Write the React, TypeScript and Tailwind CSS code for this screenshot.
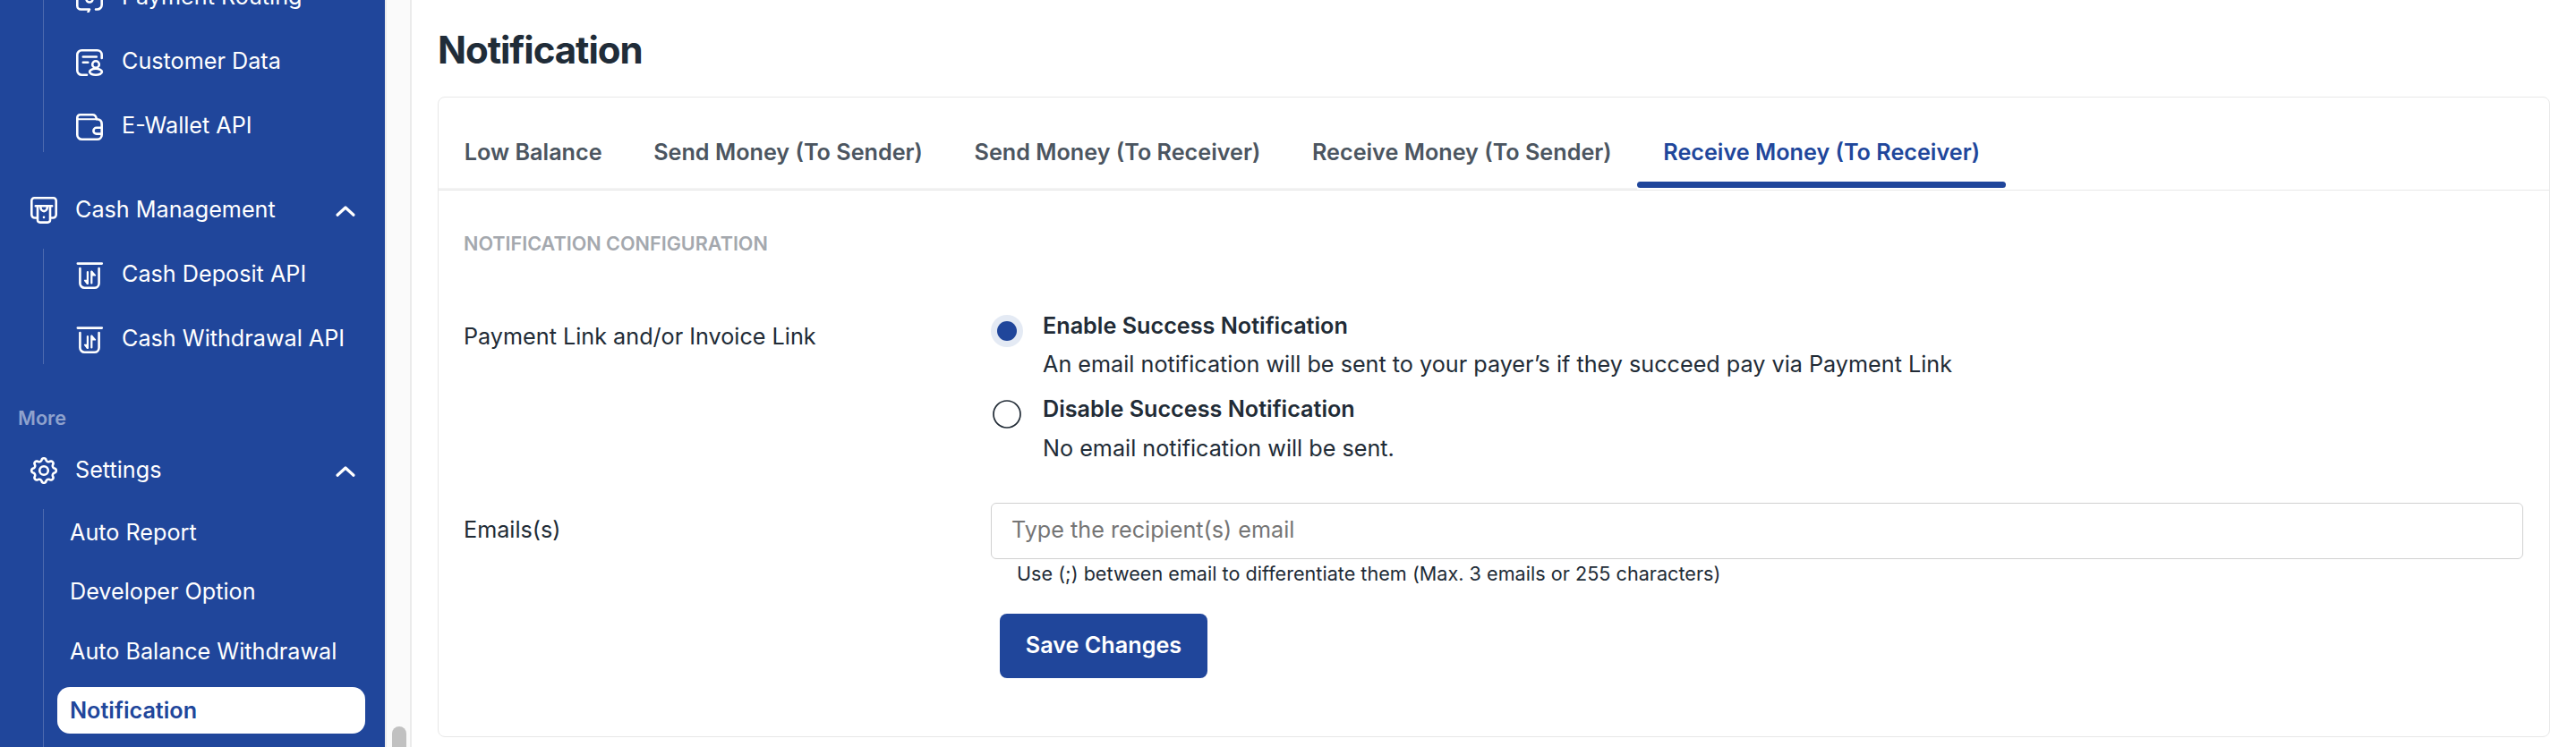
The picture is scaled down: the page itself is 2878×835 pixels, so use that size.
import type { ReactNode } from "react";

function Icon({ children }: { children: ReactNode }) {
  return (
    <svg
      width="32"
      height="32"
      viewBox="0 0 32 32"
      fill="none"
      stroke="currentColor"
      strokeWidth="2.6"
      strokeLinecap="round"
      strokeLinejoin="round"
      className="shrink-0"
    >
      {children}
    </svg>
  );
}

const RoutingIcon = () => (
  <Icon>
    <path d="M2.3 12v12.500a4 4 0 0 0 4 4H16l-1.500 3M2.300 12V7.300a5 5 0 0 1 5-5h17.400a5 5 0 0 1 5 5v16.200a5 5 0 0 1-5 5H23" />
    <circle cx="16" cy="17" r="3.500" />
  </Icon>
);

const CustomerIcon = () => (
  <Icon>
    <path d="M13 29.700H7.300a5 5 0 0 1-5-5V7.300a5 5 0 0 1 5-5h17.400a5 5 0 0 1 5 5V11" />
    <path d="M8.800 9.500h15M8.800 15.800h5.500" />
    <circle cx="23" cy="18" r="3.800" />
    <ellipse cx="23" cy="26.300" rx="6.900" ry="3.500" />
  </Icon>
);

const WalletIcon = () => (
  <Icon>
    <path d="M2.300 7V5.500a3.200 3.200 0 0 1 3.200-3.200H19.500c2.200 0 3.600 1.400 4.300 4.200" />
    <path strokeWidth="2" d="M3 7.300H24" />
    <path d="M24 7.300c3.600 0 5.700 2 5.700 5.600v11.800a5 5 0 0 1-5 5H7.300a5 5 0 0 1-5-5V6.500" />
    <path d="M29.500 16.800h-5.700a3.400 3.400 0 0 0 0 6.800h5.700" />
  </Icon>
);

const CashIcon = () => (
  <Icon>
    <path d="M7.500 24.500H5.800a3.500 3.500 0 0 1-3.500-3.500V5.300a3 3 0 0 1 3-3h21.400a3 3 0 0 1 3 3V21a3.500 3.500 0 0 1-3.500 3.500h-1.700" />
    <path d="M6.800 11.300h18.400M9 11.500v15.300a2.800 2.800 0 0 0 2.800 2.800h8.400a2.800 2.800 0 0 0 2.800-2.800V11.500" />
    <path d="M12.400 12.500a3.700 4.600 0 0 0 7.400 0M16 23.800v.2" />
  </Icon>
);

const DepositIcon = () => (
  <Icon>
    <path d="M2.800 2.600h27M5.400 8v16.700a5 5 0 0 0 5 5h11.200a5 5 0 0 0 5-5V8" />
    <path strokeWidth="2.200" d="M13.900 12v13M18.300 24.500V11.500" />
    <path strokeWidth="1.600" fill="currentColor" d="M13.600 25.300L10.700 21.500h2.900zM18.600 11.500L22.400 15.800h-3.800z" />
  </Icon>
);

const gearPath = (() => {
  const pts: string[] = [];
  for (let i = 0; i < 160; i++) {
    const a = (i / 160) * Math.PI * 2;
    const c = Math.cos(8 * a);
    const r = 12.3 + 1.45 * Math.sign(c) * Math.pow(Math.abs(c), 0.55);
    pts.push(`${(16 + r * Math.sin(a)).toFixed(2)} ${(16 - r * Math.cos(a)).toFixed(2)}`);
  }
  return `M${pts.join("L")}Z`;
})();

const GearIcon = () => (
  <Icon>
    <path d={gearPath} />
    <circle cx="16" cy="16" r="4.800" />
  </Icon>
);

const Chevron = () => (
  <svg width="24" height="14" viewBox="0 0 24 14" fill="none" stroke="currentColor" strokeWidth="3.2" strokeLinecap="round" strokeLinejoin="round">
    <path d="M3 11.200L12 3l9 8.200" />
  </svg>
);

function SubItem({ icon, label }: { icon: ReactNode; label: string }) {
  return (
    <li className="flex h-[72px] items-center gap-5">
      <span className="pt-1">{icon}</span>
      <span>{label}</span>
    </li>
  );
}

function GroupHeader({ icon, label }: { icon: ReactNode; label: string }) {
  return (
    <div className="flex h-[72px] items-center pr-8 pl-[33px]">
      <span className="pt-0.5">{icon}</span>
      <span className="ml-[19px] flex-1">{label}</span>
      <span className="pt-1">
        <Chevron />
      </span>
    </div>
  );
}

const settings = ["Auto Report", "Developer Option", "Auto Balance Withdrawal", "Notification"];

function Sidebar() {
  return (
    <aside className="flex h-full w-[430px] shrink-0 flex-col overflow-hidden bg-[#20469b] text-[25.2px] leading-8 text-white">
      <div className="-mt-10 flex shrink-0 pl-12">
        <div className="mb-1.5 w-px bg-[#4d6baf]" />
        <ul className="pl-[35px]">
          <SubItem icon={<RoutingIcon />} label="Payment Routing" />
          <SubItem icon={<CustomerIcon />} label="Customer Data" />
          <SubItem icon={<WalletIcon />} label="E-Wallet API" />
        </ul>
      </div>
      <div className="mt-[22px] shrink-0">
        <GroupHeader icon={<CashIcon />} label="Cash Management" />
        <div className="flex pl-12">
          <div className="mt-2 mb-[7px] w-px bg-[#4d6baf]" />
          <ul className="pl-[35px]">
            <SubItem icon={<DepositIcon />} label="Cash Deposit API" />
            <SubItem icon={<DepositIcon />} label="Cash Withdrawal API" />
          </ul>
        </div>
      </div>
      <div className="mt-[41px] shrink-0 pl-5 text-[21.6px] leading-6 font-semibold text-[#8fa2cd]">More</div>
      <div className="mt-2.5 shrink-0">
        <GroupHeader icon={<GearIcon />} label="Settings" />
        <div className="flex h-[300px] pt-2 pl-12">
          <div className="w-px bg-[#4d6baf]" />
          <ul className="flex w-[359px] flex-col gap-[14.4px] pl-[15px]">
            {settings.map((s) => (
              <li
                key={s}
                className={
                  s === "Notification"
                    ? "flex h-[52px] shrink-0 items-center rounded-[14px] bg-white pl-3.5 font-semibold text-[#20469b]"
                    : "flex h-[52px] shrink-0 items-center pl-3.5"
                }
              >
                {s}
              </li>
            ))}
          </ul>
        </div>
      </div>
    </aside>
  );
}

function ScrollTrack() {
  return (
    <div className="flex h-full w-[30px] shrink-0 flex-col items-center border-x-2 border-[#ebebeb] bg-[#fafafa] pt-[812px] pl-0.5">
      <div className="h-10 w-4 shrink-0 rounded-full bg-[#c1c1c1]" />
    </div>
  );
}

const tabs = [
  "Low Balance",
  "Send Money (To Sender)",
  "Send Money (To Receiver)",
  "Receive Money (To Sender)",
];

function Option({ checked, title, text }: { checked?: boolean; title: string; text: string }) {
  return (
    <div className="flex h-[93.4px]">
      {checked ? (
        <span className="mt-0.5 flex size-9 shrink-0 items-center justify-center rounded-full bg-[#e4eaf4]">
          <span className="size-[22px] rounded-full bg-[#20469b]" />
        </span>
      ) : (
        <svg className="mx-0.5 mt-[3.6px] size-8 shrink-0" viewBox="0 0 32 32" fill="none" stroke="#212b36" strokeWidth="1.7">
          <circle cx="16" cy="16" r="15" />
        </svg>
      )}
      <div className="ml-[22px]">
        <div className="mt-[-8px] h-[43.4px] leading-[44px] font-semibold">{title}</div>
        <div className="leading-[44px]">{text}</div>
      </div>
    </div>
  );
}

export default function App() {
  return (
    <div className="flex h-[835px] w-[2878px] overflow-hidden bg-white font-['Inter',sans-serif] text-[25.2px] text-[#212b36]">
      <Sidebar />
      <ScrollTrack />
      <main className="flex-1 px-[29px]">
        <h1 className="pt-[31px] text-[42px] leading-[49px] font-bold tracking-[-1.05px] text-[#202c38]">Notification</h1>
        <section className="mt-7 h-[716px] rounded-lg border border-[#e8e8e8]">
          <div className="flex h-[104px] border-b border-[#e8e8e8] font-semibold text-[#4b5560]">
            {tabs.map((t) => (
              <div key={t} className="flex h-[103px] items-center border-b-2 border-[#f3f3f3] px-[28.8px] pt-[23px]">
                {t}
              </div>
            ))}
            <div className="flex h-[103px] flex-col pb-0.5 text-[#20469b]">
              <div className="flex flex-1 items-center px-[28.8px] pt-[30px]">Receive Money (To Receiver)</div>
              <div className="h-[7px] rounded-[3.5px] bg-[#20469b]" />
            </div>
          </div>
          <div className="pr-[29px] pl-7">
            <h2 className="pt-[47px] text-[21.6px] leading-6 font-semibold text-[#a4a8ae]">NOTIFICATION CONFIGURATION</h2>
            <div className="mt-[66px] flex">
              <div className="w-[589px] shrink-0 pt-2.5 leading-8">Payment Link and/or Invoice Link</div>
              <div>
                <Option
                  checked
                  title="Enable Success Notification"
                  text="An email notification will be sent to your payer’s if they succeed pay via Payment Link"
                />
                <Option title="Disable Success Notification" text="No email notification will be sent." />
              </div>
            </div>
            <div className="mt-[25.2px] flex">
              <div className="w-[589px] shrink-0 pt-3.5 leading-8">Emails(s)</div>
              <div className="flex-1">
                <input
                  type="text"
                  placeholder="Type the recipient(s) email"
                  className="block h-[63px] w-full rounded-md border border-[#d1d1d1] px-[22px] pb-0.5 leading-8 placeholder:text-[#757575]"
                />
                <div className="mt-1 pl-[29px] text-[21.6px] leading-6 tracking-[0.02px]">
                  Use (;) between email to differentiate them (Max. 3 emails or 255 characters)
                </div>
                <button className="mt-[33px] ml-[10px] block h-[72px] w-[232px] rounded-lg bg-[#20469b] pb-[2px] leading-[68px] font-semibold text-white">
                  Save Changes
                </button>
              </div>
            </div>
          </div>
        </section>
      </main>
    </div>
  );
}
